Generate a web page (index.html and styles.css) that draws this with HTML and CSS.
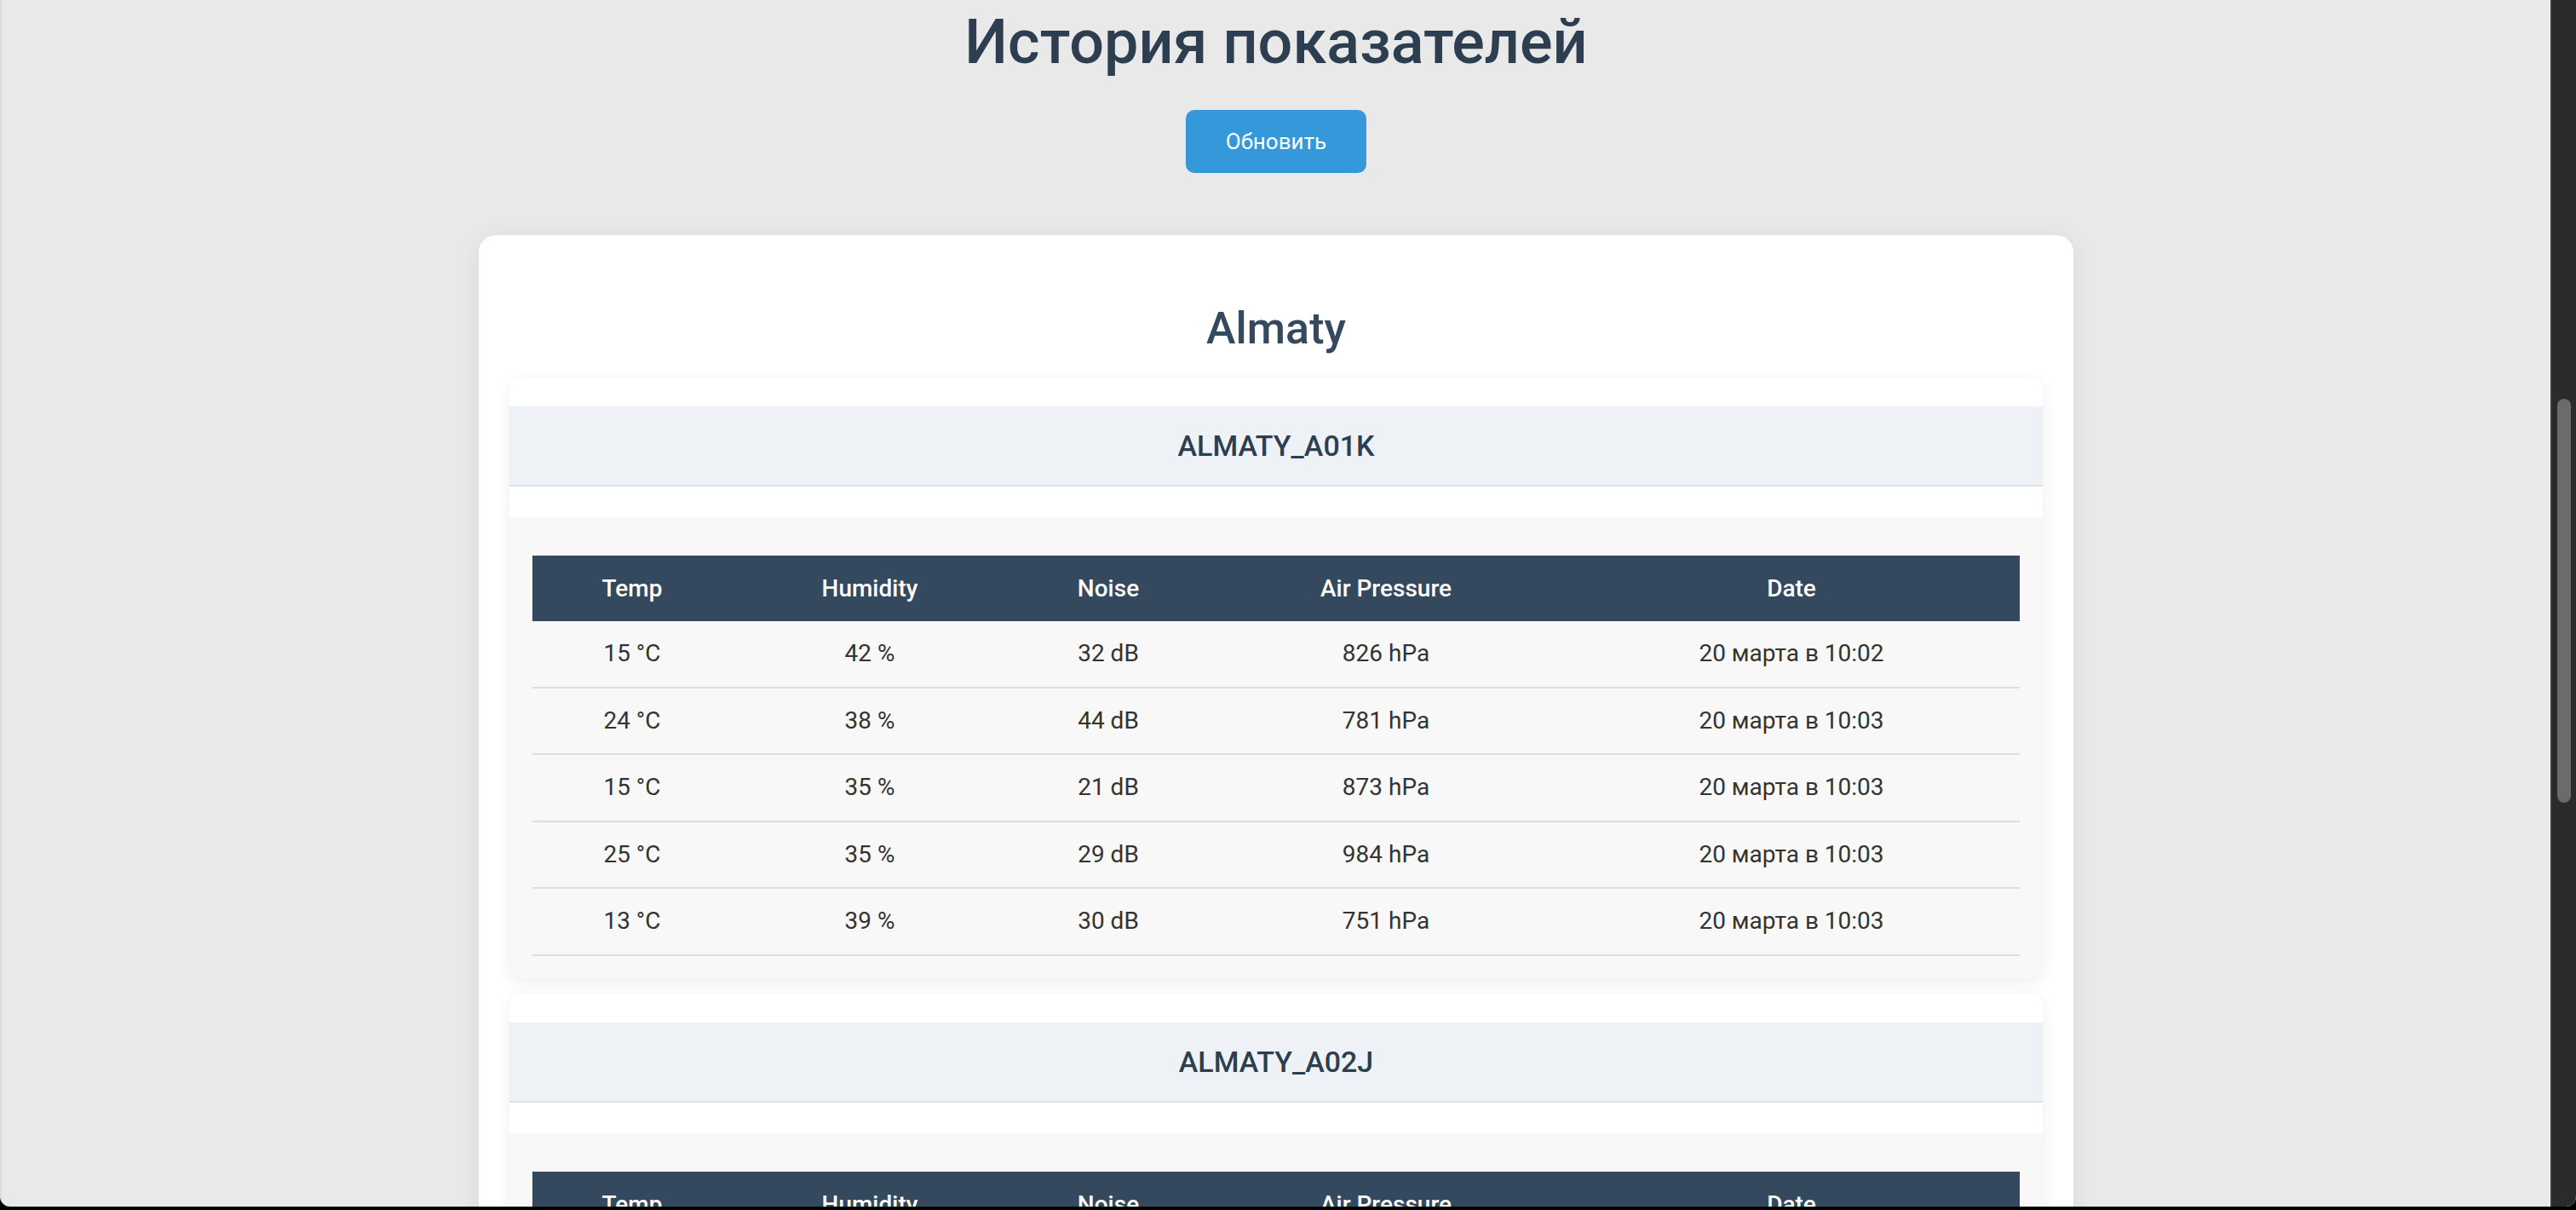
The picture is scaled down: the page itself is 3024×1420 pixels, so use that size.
FILE: index.html
```html
<!DOCTYPE html>
<html lang="ru">
<head>
<meta charset="utf-8">
<title>История показателей</title>
<link rel="stylesheet" href="styles.css">
</head>
<body>
<div class="viewport">
  <h1 class="page-title">История показателей</h1>
  <div class="actions"><button class="refresh-btn" type="button">Обновить</button></div>
  <section class="city-card">
    <h2 class="city-title">Almaty</h2>
    <div class="sensor-card">
      <h3 class="sensor-title">ALMATY_A01K</h3>
      <div class="table-wrap">
        <table class="data-table">
          <colgroup><col class="c-temp"><col class="c-hum"><col class="c-noise"><col class="c-press"><col class="c-date"></colgroup>
          <thead><tr><th>Temp</th><th>Humidity</th><th>Noise</th><th>Air Pressure</th><th>Date</th></tr></thead>
          <tbody>
            <tr><td>15 °C</td><td>42 %</td><td>32 dB</td><td>826 hPa</td><td>20 марта в 10:02</td></tr>
            <tr><td>24 °C</td><td>38 %</td><td>44 dB</td><td>781 hPa</td><td>20 марта в 10:03</td></tr>
            <tr><td>15 °C</td><td>35 %</td><td>21 dB</td><td>873 hPa</td><td>20 марта в 10:03</td></tr>
            <tr><td>25 °C</td><td>35 %</td><td>29 dB</td><td>984 hPa</td><td>20 марта в 10:03</td></tr>
            <tr><td>13 °C</td><td>39 %</td><td>30 dB</td><td>751 hPa</td><td>20 марта в 10:03</td></tr>
          </tbody>
        </table>
      </div>
    </div>
    <div class="sensor-card">
      <h3 class="sensor-title">ALMATY_A02J</h3>
      <div class="table-wrap">
        <table class="data-table">
          <colgroup><col class="c-temp"><col class="c-hum"><col class="c-noise"><col class="c-press"><col class="c-date"></colgroup>
          <thead><tr><th>Temp</th><th>Humidity</th><th>Noise</th><th>Air Pressure</th><th>Date</th></tr></thead>
          <tbody>
            <tr><td>17 °C</td><td>40 %</td><td>35 dB</td><td>812 hPa</td><td>20 марта в 10:02</td></tr>
            <tr><td>22 °C</td><td>37 %</td><td>41 dB</td><td>799 hPa</td><td>20 марта в 10:03</td></tr>
          </tbody>
        </table>
      </div>
    </div>
  </section>
</div>
<div class="scrollbar"><div class="scroll-thumb"></div></div>
</body>
</html>
```

FILE: styles.css
```css
html {
  background: #000;
  margin: 0;
  padding: 0;
}
body {
  margin: 0;
  height: 1416px;
  overflow: hidden;
  display: flex;
  background: #e9e9e9;
  border-radius: 0 0 12px 12px;
  font-family: Roboto, "Noto Sans", "Liberation Sans", sans-serif;
}
.viewport {
  flex: 1;
  min-width: 0;
  padding-top: 8px;
  border-left: 2px solid #dddddd;
  border-bottom-left-radius: 12px;
}
.page-title {
  margin: 0;
  text-align: center;
  font-size: 72px;
  line-height: 84px;
  font-weight: 500;
  color: #2c3e50;
}
.actions {
  display: flex;
  justify-content: center;
  margin-top: 37px;
}
.refresh-btn {
  border: 0;
  background: #3498db;
  color: #fff;
  font-family: inherit;
  font-size: 26px;
  line-height: 30px;
  padding: 22px 47px;
  border-radius: 10px;
}
.city-card {
  width: 1872px;
  box-sizing: border-box;
  margin: 73px auto 0;
  padding: 0 36px 36px;
  background: #fff;
  border-radius: 20px;
  box-shadow: 0 4px 28px rgba(0, 0, 0, 0.07);
}
.city-title {
  margin: 0;
  padding: 79px 0 27px;
  text-align: center;
  font-size: 52px;
  line-height: 61px;
  font-weight: 500;
  color: #34495e;
}
.sensor-card {
  background: #fff;
  border-radius: 16px;
  overflow: hidden;
  box-shadow: 0 4px 18px rgba(0, 0, 0, 0.07);
  margin-bottom: 17px;
}
.sensor-title {
  margin: 34px 0 36px;
  padding: 26px 0;
  background: #eef2f7;
  border-bottom: 2px solid #dde2e8;
  text-align: center;
  font-size: 34px;
  line-height: 40px;
  font-weight: 500;
  color: #2c3e50;
}
.table-wrap {
  background: #f8f8f8;
  padding: 45px 27px 27px;
}
.data-table {
  width: 100%;
  border-collapse: collapse;
  table-layout: fixed;
  font-size: 28px;
}
.c-temp { width: 234px; }
.c-hum { width: 324px; }
.c-noise { width: 236px; }
.c-press { width: 416px; }
.c-date { width: 536px; }
.data-table th {
  background: #34495e;
  color: #fff;
  font-weight: 500;
  padding: 21px 0;
  line-height: 35px;
  text-align: center;
}
.data-table td {
  color: #333;
  padding: 21px 0 21.5px;
  line-height: 34px;
  text-align: center;
  border-bottom: 2px solid #dedede;
}
.scrollbar {
  width: 28px;
  flex: none;
  background: #2b2b2b;
  border-left: 2px solid #3a3a3a;
  border-bottom-right-radius: 12px;
}
.scroll-thumb {
  margin: 468px 0 0 6px;
  width: 16px;
  height: 474px;
  border-radius: 8px;
  background: #6b6b6b;
}
```
